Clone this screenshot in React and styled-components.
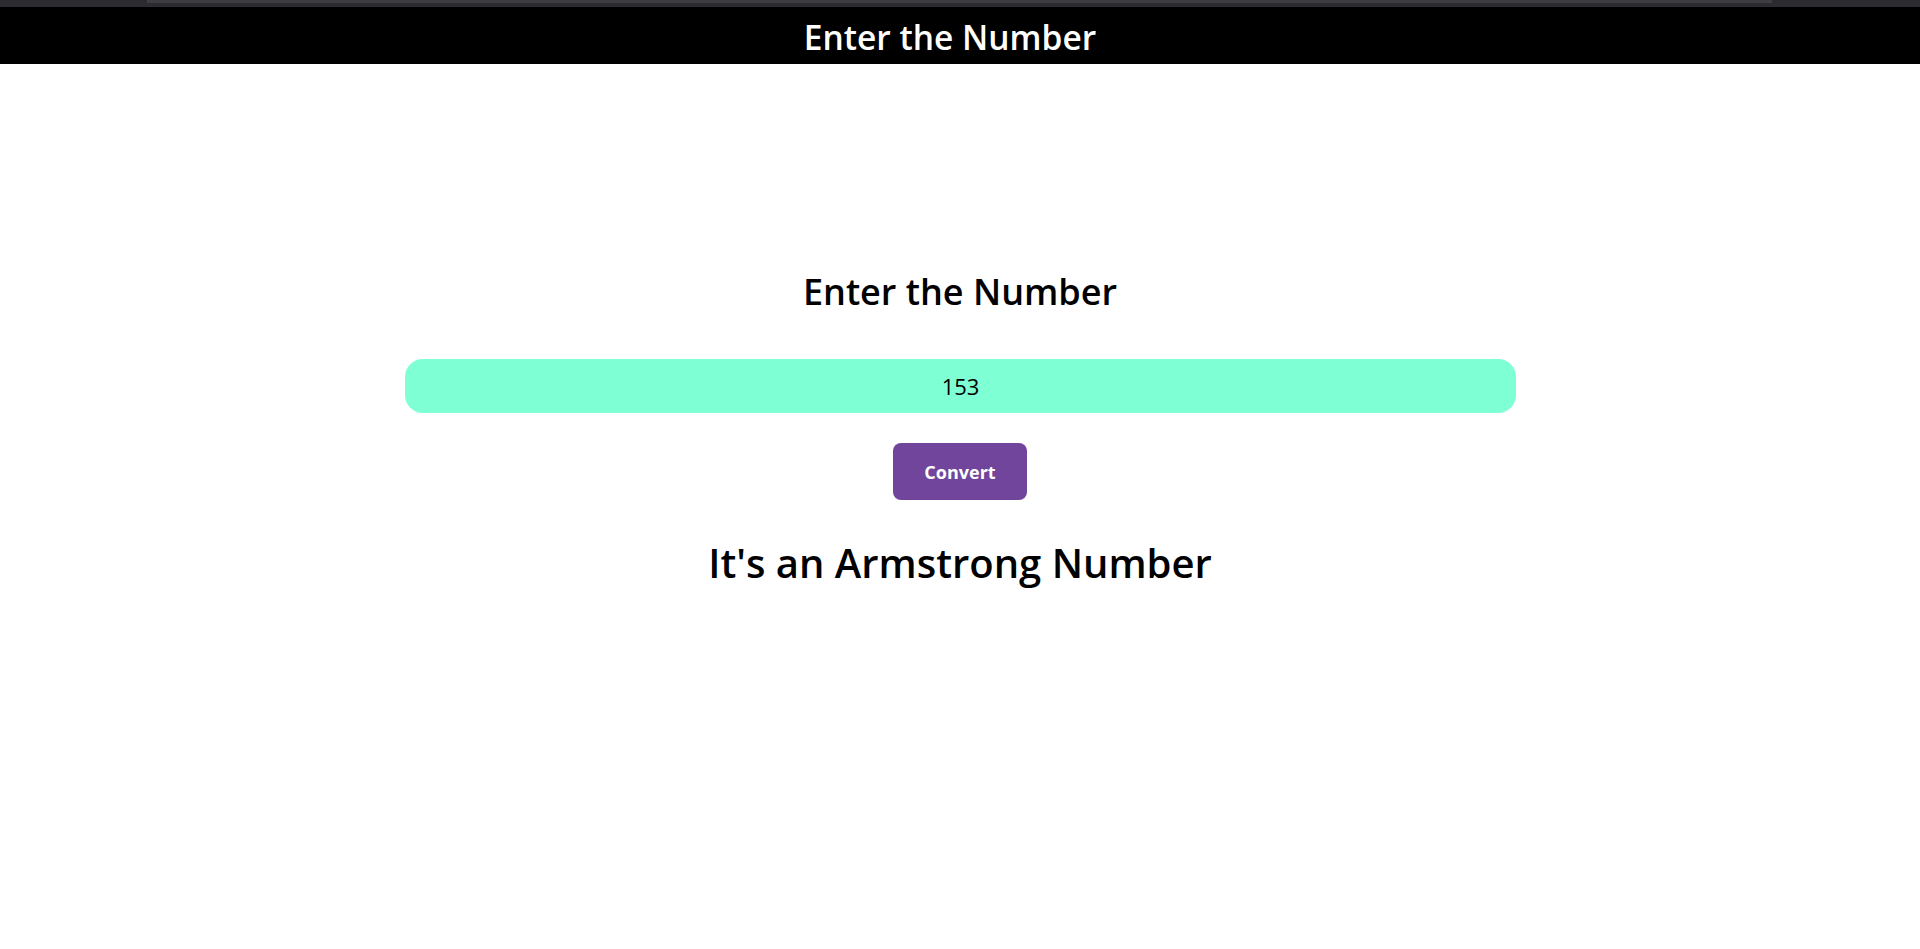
import React, { useState } from "react";
import styled, { createGlobalStyle } from "styled-components";

const GlobalStyle = createGlobalStyle`
	* {
		box-sizing: border-box;
	}

	body {
		margin: 0;
		background: #ffffff;
		font-family: "Open Sans", "Noto Sans", sans-serif;
	}
`;

const isArmstrong = (value) => {
	const digits = String(value).split("");
	const sum = digits.reduce(
		(acc, d) => acc + Math.pow(Number(d), digits.length),
		0
	);
	return sum === Number(value);
};

const App = () => {
	const [num, setNum] = useState("153");
	const [result, setResult] = useState(
		isArmstrong(153) ? "It's an Armstrong Number" : "It's not an Armstrong Number"
	);

	const handleConvert = () => {
		if (!num) return;
		setResult(
			isArmstrong(num)
				? "It's an Armstrong Number"
				: "It's not an Armstrong Number"
		);
	};

	return (
		<Page>
			<GlobalStyle />
			<TopStrip>
				<StripTrack />
			</TopStrip>
			<Header>
				<h1>Enter the Number</h1>
			</Header>
			<Main>
				<Title>Enter the Number</Title>
				<NumberInput
					type="text"
					value={num}
					onChange={(e) => setNum(e.target.value)}
				/>
				<ConvertButton onClick={handleConvert}>Convert</ConvertButton>
				<Result>{result}</Result>
			</Main>
		</Page>
	);
};

export default App;

const Page = styled.div`
	min-height: 100vh;
	display: flex;
	flex-direction: column;
`;

const TopStrip = styled.div`
	height: 7px;
	background: #2c2c30;
	padding: 0 148px 0 147px;
`;

const StripTrack = styled.div`
	height: 3px;
	background: #3d3d42;
`;

const Header = styled.header`
	height: 57px;
	background: #000000;
	display: flex;
	justify-content: center;
	align-items: center;
	padding-right: 20px;

	h1 {
		margin: 0;
		padding-top: 4px;
		color: #ffffff;
		font-size: 33.5px;
		font-weight: 600;
		line-height: 1;
	}
`;

const Main = styled.main`
	display: flex;
	flex-direction: column;
	align-items: center;
	padding-top: 209px;
`;

const Title = styled.h2`
	margin: 0 0 49px;
	font-size: 36px;
	font-weight: 600;
	line-height: 37px;
	color: #000000;
`;

const NumberInput = styled.input`
	width: 1111px;
	height: 54px;
	border: none;
	outline: none;
	border-radius: 18px;
	background: #7fffd4;
	text-align: center;
	font-family: "Open Sans", "Noto Sans", sans-serif;
	font-size: 22px;
	color: #000000;
	margin-left: 1px;
`;

const ConvertButton = styled.button`
	margin-top: 30px;
	width: 134px;
	height: 57px;
	border: none;
	border-radius: 8px;
	background: #70459b;
	color: #ffffff;
	font-family: "Open Sans", "Noto Sans", sans-serif;
	font-size: 18px;
	font-weight: 700;
	cursor: pointer;
`;

const Result = styled.h2`
	margin: 42px 0 0;
	font-size: 40px;
	font-weight: 600;
	line-height: 41px;
	color: #000000;
`;
